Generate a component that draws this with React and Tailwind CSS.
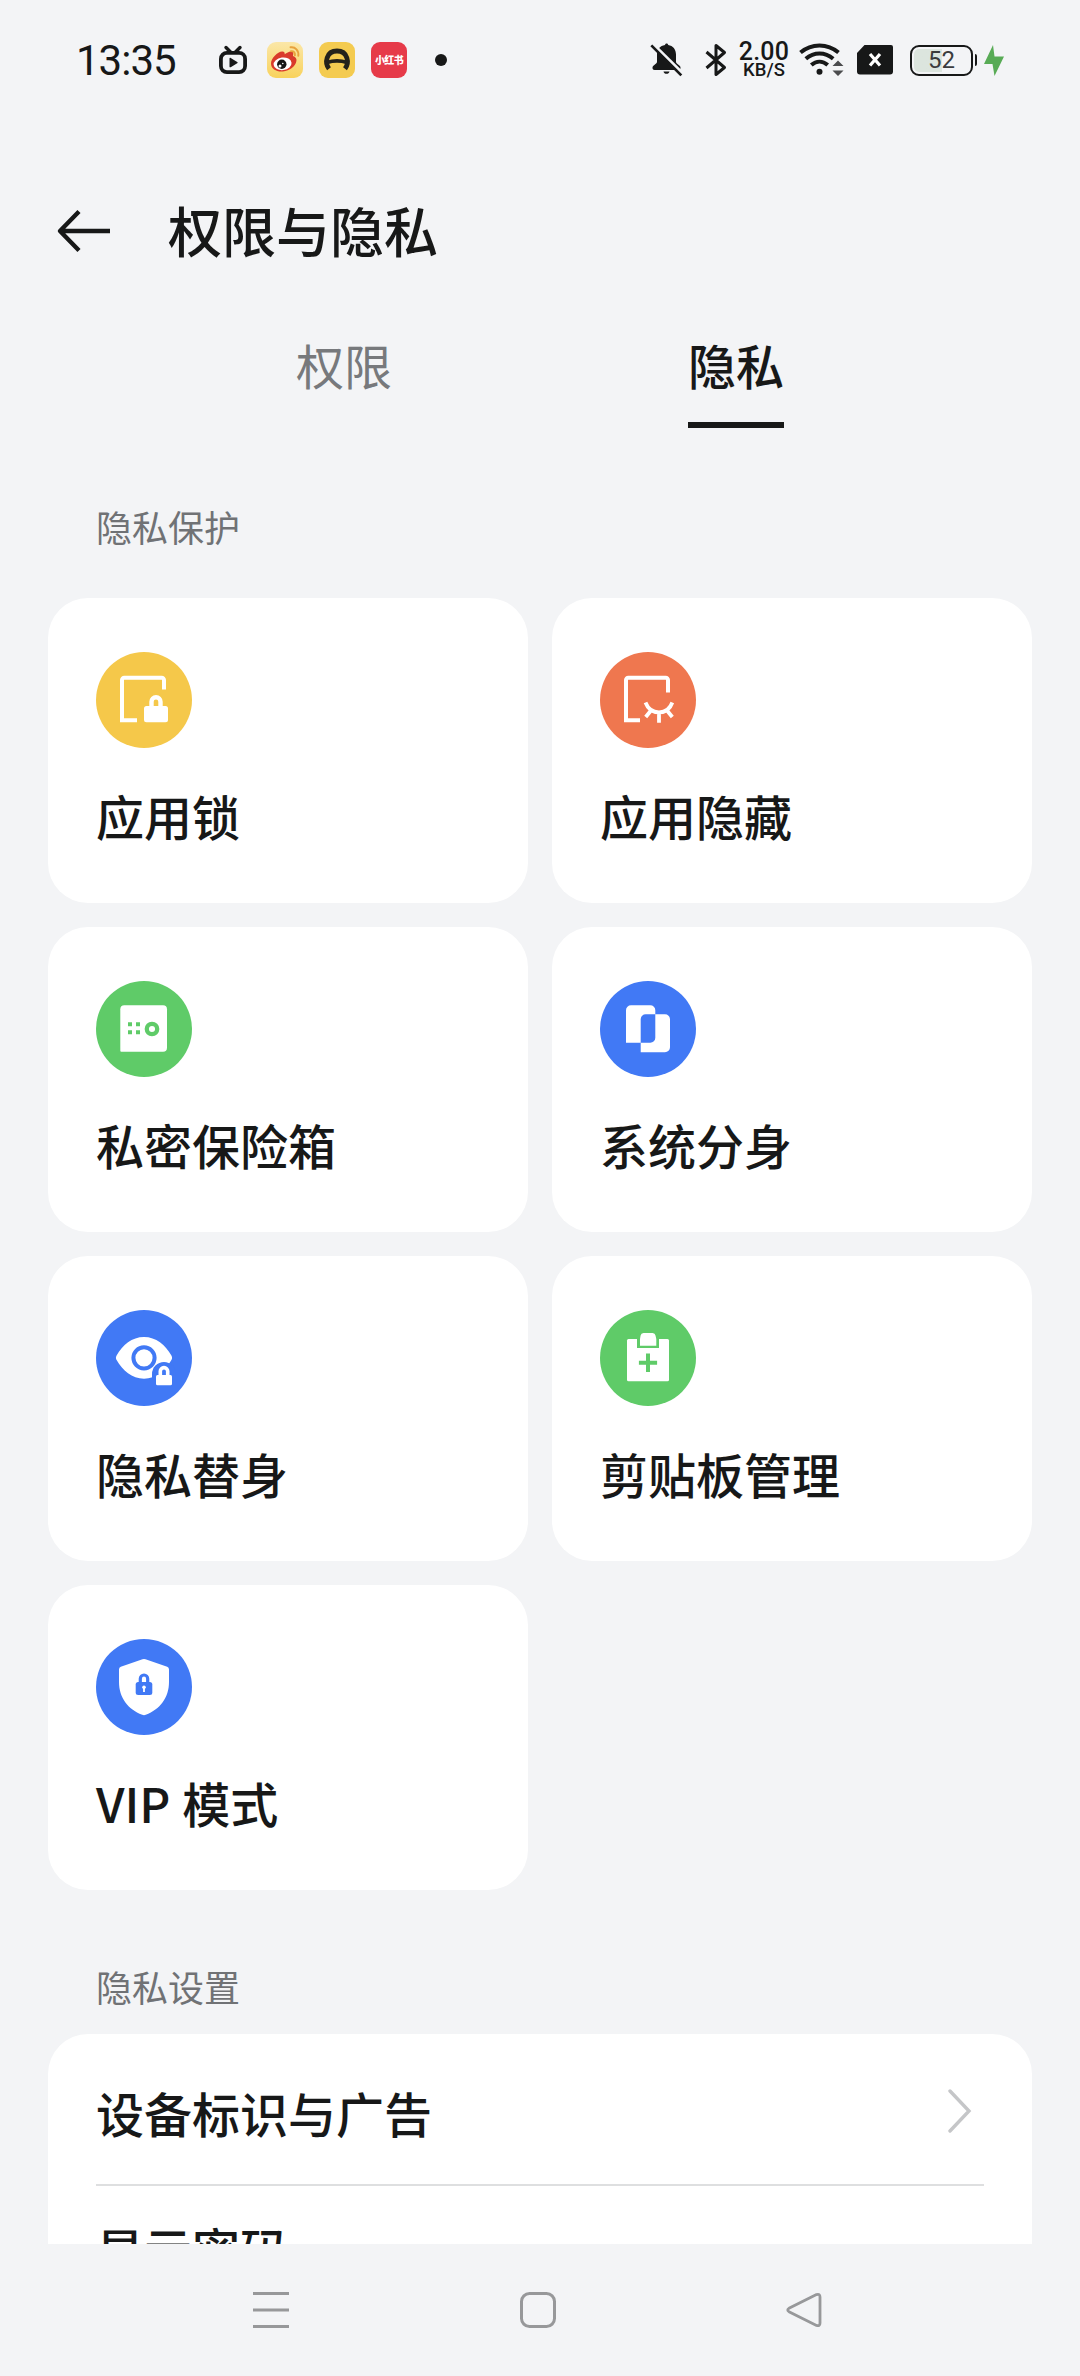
import clsx from 'clsx';

const AppLockIcon = () => (
  <>
    <path d="M68 37.500V28a2.300 2.300 0 0 0-2.300-2.300H28.300A2.300 2.300 0 0 0 26 28v40.300h15" fill="none" stroke="#fff" strokeWidth="4" />
    <rect x="48" y="54" width="24" height="16.300" rx="2.500" fill="#fff" />
    <path d="M55.500 56v-6.300a4.500 4.500 0 0 1 9 0V56" fill="none" stroke="#fff" strokeWidth="4.400" />
  </>
);

const AppHideIcon = () => (
  <>
    <path d="M68 40.500V28a2.300 2.300 0 0 0-2.300-2.300H28.300A2.300 2.300 0 0 0 26 28v40.300h14" fill="none" stroke="#fff" strokeWidth="4" />
    <path
      d="M45.500 50.500C48 57 53 60.300 59 60.300S70 57 72.300 50.500M59 60.300v10.500M51 58.500l-5.300 6.500M67 58.500l5.300 6.500"
      fill="none"
      stroke="#fff"
      strokeWidth="3.800"
    />
  </>
);

const SafeIcon = () => (
  <>
    <path d="M28.300 24.300H67a4 4 0 0 1 4 4v38.400a4 4 0 0 1-4 4H25.300a1 1 0 0 1-1-1V28.300a4 4 0 0 1 4-4Z" fill="#fff" />
    <path d="M32 41.300h4v4h-4zM40 41.300h4v4h-4zM32 49.300h4v4h-4zM40 49.300h4v4h-4z" fill="#5fcb68" />
    <circle cx="56" cy="48" r="5.200" fill="none" stroke="#5fcb68" strokeWidth="4.300" />
  </>
);

const CloneIcon = () => (
  <path
    clipRule="evenodd"
    d="M31 24.300h19.300a5 5 0 0 1 5 5v27.400a5 5 0 0 1-5 5H26V29.300a5 5 0 0 1 5-5ZM45.700 33.300H65a5 5 0 0 1 5 5v28a5 5 0 0 1-5 5H40.700v-33a5 5 0 0 1 5-5Z"
    fill="#fff"
    fillRule="evenodd"
  />
);

const EyeLockIcon = () => (
  <>
    <path
      d="M20.600 45.500C26.500 35 36 27 48 27s21.500 8 27.400 18.500c.9 1.600.9 3 0 4.600C69.500 60.500 60 68.700 48 68.700S26.500 60.500 20.600 50.100c-.9-1.600-.9-3 0-4.600Z"
      fill="#fff"
    />
    <circle cx="48" cy="47.800" r="10.600" fill="none" stroke="#4179f5" strokeWidth="4" />
    <path d="M56 79V64a12 12 0 0 1 24 0v15Z" fill="#4179f5" />
    <rect x="60" y="65" width="16" height="10.200" rx="1.500" fill="#fff" />
    <path d="M64.300 67v-5.700a3.700 3.700 0 0 1 7.400 0V67" fill="none" stroke="#fff" strokeWidth="3.600" />
  </>
);

const ClipboardIcon = () => (
  <>
    <rect x="27" y="29" width="42" height="42.300" rx="1.500" fill="#fff" />
    <path d="M37 28h22v10H37z" fill="#5fcb68" />
    <path d="M43.500 23h9a3 3 0 0 1 3 2.500l.8 3.500v6.700H40V29l.6-3.500a3 3 0 0 1 2.900-2.500Z" fill="#fff" />
    <path d="M48 43.500V62M38.900 52.700h18.200" stroke="#5fcb68" strokeWidth="4" />
  </>
);

const ShieldIcon = () => (
  <>
    <path
      d="M46.500 20.300a4 4 0 0 1 3 0l21.700 7.500Q73 28.500 73 30.500V43c0 15.500-9 27.500-23.200 32.700a4 4 0 0 1-3.600 0C32 70.500 23 58.500 23 43V30.500q0-2 1.800-2.700Z"
      fill="#fff"
    />
    <rect x="39.700" y="43" width="16.600" height="13" rx="2.500" fill="#4179f5" />
    <path d="M44.300 45v-5.300a3.700 3.700 0 0 1 7.400 0V45" fill="none" stroke="#4179f5" strokeWidth="3.200" />
    <circle cx="48" cy="48.300" r="1.800" fill="#fff" />
    <path d="M48 48v5" stroke="#fff" strokeWidth="1.800" />
  </>
);

const privacyCards = [
  { title: '应用锁', color: 'fill-[#f5c84a]', Icon: AppLockIcon },
  { title: '应用隐藏', color: 'fill-[#ef774f]', Icon: AppHideIcon },
  { title: '私密保险箱', color: 'fill-[#5fcb68]', Icon: SafeIcon },
  { title: '系统分身', color: 'fill-[#4179f5]', Icon: CloneIcon },
  { title: '隐私替身', color: 'fill-[#4179f5]', Icon: EyeLockIcon },
  { title: '剪贴板管理', color: 'fill-[#5fcb68]', Icon: ClipboardIcon },
  { title: 'VIP 模式', color: 'fill-[#4179f5]', Icon: ShieldIcon },
];

const tabs = [
  { label: '权限', active: false },
  { label: '隐私', active: true },
];

const StatusLeft = () => (
  <div className="flex items-center">
    <span className="w-[143px] pt-[2px] font-['Roboto'] text-[42px] leading-none tracking-[-1px]">13:35</span>
    <svg className="mr-[20px] h-9 w-7" viewBox="0 0 28 36" fill="none">
      <path d="M7 5.500l4.500 4.500M21 5.500L16.500 10" stroke="#171818" strokeWidth="3.400" strokeLinecap="round" />
      <rect x="1.900" y="10.900" width="24.200" height="19.200" rx="6" stroke="#171818" strokeWidth="3.800" />
      <path d="M10.500 16.500v8c0 .8.600 1 1.200.7l6.500-3.900c.6-.4.6-1 0-1.400l-6.500-4c-.6-.4-1.200-.2-1.200.6Z" fill="#171818" />
    </svg>
    <svg className="mr-4 size-9" viewBox="0 0 36 36" fill="none">
      <defs>
        <linearGradient id="weibo-bg" x1="0" y1="0" x2="0" y2="1">
          <stop offset="0" stopColor="#fbe7a8" />
          <stop offset="1" stopColor="#f8d25c" />
        </linearGradient>
      </defs>
      <rect width="36" height="36" rx="9" fill="url(#weibo-bg)" />
      <path
        d="M4 21.500c0-5 6.500-11.800 11.200-12 2-.1 2.700 1.200 2.500 2.700 2.300-1.400 5-3.400 7.200-2.600 1.800.7 1.600 2.600 1 4.400 2.700.7 4 2.700 3.500 5-.8 5.200-6.700 9.900-13.500 10.500C9.500 30 4 27 4 21.500Z"
        fill="#d93a2b"
      />
      <ellipse cx="15.600" cy="21.800" rx="9" ry="6.300" fill="#fff" transform="rotate(-7 15.600 21.800)" />
      <circle cx="14.800" cy="22.300" r="4.700" fill="#151515" />
      <circle cx="13" cy="24" r="1.500" fill="#fff" />
      <circle cx="15.800" cy="21.500" r=".8" fill="#fff" />
      <path d="M23.500 5.300c4.800-.8 8.500 3.300 7.800 8.500M24 9.200c2.700-.4 4.300 1.500 3.900 4.200" stroke="#e8a23c" strokeWidth="1.900" strokeLinecap="round" />
    </svg>
    <svg className="mr-4 size-9" viewBox="0 0 36 36" fill="none">
      <rect width="36" height="36" rx="9" fill="#f4cb50" />
      <path d="M10 26.800C5.500 21 7 9 18 9s12.500 12 8 17.800" stroke="#24221b" strokeWidth="4.800" />
      <path d="M8 20.500c6-1.900 14-1.900 20 0" stroke="#24221b" strokeWidth="3.800" />
    </svg>
    <span className="mr-[28px] flex size-9 items-center justify-center rounded-[9px] bg-[#e63a49] text-[10px] font-black leading-none tracking-[-0.6px] text-white">
      小红书
    </span>
    <span className="size-3 rounded-full bg-[#171818]" />
  </div>
);

const StatusRight = () => (
  <div className="flex items-center">
    <svg className="mr-[22px] h-9 w-[33px]" viewBox="0 0 33 36" fill="none">
      <path
        d="M16.600 1.500c.9 0 1.500.6 1.600 1.500 4.800.8 7.800 4.300 7.800 9.500v7.300c0 .8.300 1.200.9 1.700l2.400 2c.8.700 1.200 1.300 1.200 2.300 0 1.400-.7 2.200-2.100 2.200H4.600C3.200 28 2.500 27.200 2.500 25.800c0-1 .4-1.600 1.200-2.300l2.400-2c.6-.5.9-.9.900-1.700v-7.300C7 7.300 10.100 3.800 15 3c.1-.9.700-1.500 1.600-1.500ZM13.500 29.500h6c-.3 1.500-1.500 2.300-3 2.300s-2.700-.8-3-2.300Z"
        fill="#171818"
      />
      <path d="M1.500 0.500l31.500 31" stroke="#f3f4f6" strokeWidth="3" />
      <path d="M1.300 3.300l30 30" stroke="#171818" strokeWidth="2.600" />
    </svg>
    <svg className="mr-[12px] h-9 w-[22px]" viewBox="0 0 22 36" fill="none">
      <path d="M1.500 10L19.500 25.500 11 32.500V3.500l8.500 7L1.500 26" stroke="#171818" strokeWidth="3" strokeLinejoin="round" />
    </svg>
    <div className="mr-[10px] flex w-[50px] flex-col items-center font-['Roboto'] font-medium">
      <span className="text-[25px] leading-[21px] tracking-[0.2px]">2.00</span>
      <span className="text-[18.500px] leading-[17px]">KB/S</span>
    </div>
    <svg className="mr-[12px] h-9 w-[46px]" viewBox="0 0 46 36" fill="none">
      <path d="M1.500 10.500c11-9.500 27-9.500 38 0M6.800 16.800c8.200-7.200 19.200-7.200 27.400 0M12.300 23c5-4.400 11.400-4.400 16.400 0" stroke="#171818" strokeWidth="4" />
      <circle cx="20.500" cy="29.800" r="3" fill="#171818" />
      <path d="M39 18.500l5.500 5.500h-11zM39 34l5.500-5.500h-11z" fill="#4b4c4e" />
    </svg>
    <svg className="mr-[17px] h-[30px] w-9" viewBox="0 0 36 30" fill="none">
      <path d="M7.500 0H34a2 2 0 0 1 2 2v24.500a3 3 0 0 1-3 3H3a3 3 0 0 1-3-3V8Z" fill="#171818" />
      <path d="M13 9l10 11.500M23 9L13 20.500" stroke="#fff" strokeWidth="3.200" />
    </svg>
    <div className="flex h-[31px] w-[63px] items-center justify-center rounded-[9px] border-2 border-[#171818] bg-linear-to-r from-[#dce5de] from-0% via-[#dce5de] via-50% to-transparent to-50% bg-clip-content p-[2px]">
      <span className="font-['Roboto'] text-[24px] leading-none text-[#3b3c3d]">52</span>
    </div>
    <span className="ml-[2px] mr-[7px] h-[12px] w-[2px] rounded-r-sm bg-[#171818]" />
    <svg className="h-[31px] w-[20px]" viewBox="0 0 20 31">
      <path d="M9 0L0 19h8.500L10.500 31 20 11.500h-9.500Z" fill="#58ab56" />
    </svg>
  </div>
);

const SectionLabel = ({ children, className }) => (
  <h2 className={clsx('px-12 text-4xl leading-9 text-[#707275]', className)}>{children}</h2>
);

const PrivacyCard = ({ title, color, Icon }) => (
  <button className="flex h-[305px] flex-col items-start rounded-[40px] bg-white px-12 pt-[54px] text-left" type="button">
    <svg className="size-24" viewBox="0 0 96 96">
      <circle className={color} cx="48" cy="48" r="48" />
      <Icon />
    </svg>
    <span className="mt-[43px] text-5xl font-medium leading-[48px] [word-spacing:1px]">{title}</span>
  </button>
);

const App = () => (
  <div className="flex h-[2376px] w-[1080px] flex-col overflow-hidden bg-gray-100 font-['Noto_Sans_CJK_SC',sans-serif] text-[#171818]">
    <div className="flex h-[120px] shrink-0 items-center justify-between px-[76px]">
      <StatusLeft />
      <StatusRight />
    </div>

    <header className="flex h-[220px] shrink-0 items-center pl-14">
      <svg className="mt-[2px] h-11 w-14" viewBox="0 0 56 44" fill="none">
        <path d="M54 22H4M23 2.500L4 22l19 19.500" stroke="#171818" strokeWidth="4.400" strokeLinejoin="round" />
      </svg>
      <h1 className="ml-[56px] text-[54px] font-medium leading-none">权限与隐私</h1>
    </header>

    <nav className="flex shrink-0 justify-center gap-[296px]">
      {tabs.map((tab) => (
        <button
          className={clsx(
            'border-b-[6px] pb-[34px] text-5xl leading-[48px]',
            tab.active ? 'border-[#171818] font-medium' : 'border-transparent text-[#77797c]',
          )}
          key={tab.label}
          type="button"
        >
          {tab.label}
        </button>
      ))}
    </nav>

    <main className="flex min-h-0 flex-1 flex-col overflow-hidden px-12">
      <SectionLabel className="mt-20">隐私保护</SectionLabel>
      <div className="mt-[54px] grid grid-cols-2 gap-6">
        {privacyCards.map((card) => (
          <PrivacyCard key={card.title} {...card} />
        ))}
      </div>

      <SectionLabel className="mt-[78px]">隐私设置</SectionLabel>
      <div className="mt-[30px] h-[400px] shrink-0 rounded-[40px] bg-white px-12">
        <div className="flex h-[152px] items-center justify-between border-b-2 border-[#dedfe0]">
          <span className="pt-[5px] text-5xl font-medium leading-[48px]">设备标识与广告</span>
          <svg className="mr-3 mt-1 h-11 w-6" viewBox="0 0 24 44" fill="none">
            <path d="M2 2l19 20L2 42" stroke="#c5c6c8" strokeWidth="3.400" strokeLinecap="round" />
          </svg>
        </div>
        <div className="pt-[38px] text-5xl font-medium leading-[48px]">显示密码</div>
      </div>
    </main>

    <footer className="flex h-[132px] shrink-0 items-center justify-center gap-[230px] pr-[6px]">
      <svg className="h-9 w-[38px]" viewBox="0 0 38 36">
        <path d="M1 1.600h36M1 18h36M1 34.400h36" stroke="#97989a" strokeWidth="3" />
      </svg>
      <svg className="size-9" viewBox="0 0 36 36">
        <rect x="1.500" y="1.500" width="33" height="33" rx="8" fill="none" stroke="#97989a" strokeWidth="3" />
      </svg>
      <svg className="h-9 w-[36px]" viewBox="0 0 36 36">
        <path d="M30.500 2.600L3 16.300q-2.500 1.700 0 3.400l27.500 13.700q3.500 1.200 3.500-2.400V5q0-3.600-3.500-2.400Z" fill="none" stroke="#97989a" strokeWidth="2.800" />
      </svg>
    </footer>
  </div>
);

export default App;
